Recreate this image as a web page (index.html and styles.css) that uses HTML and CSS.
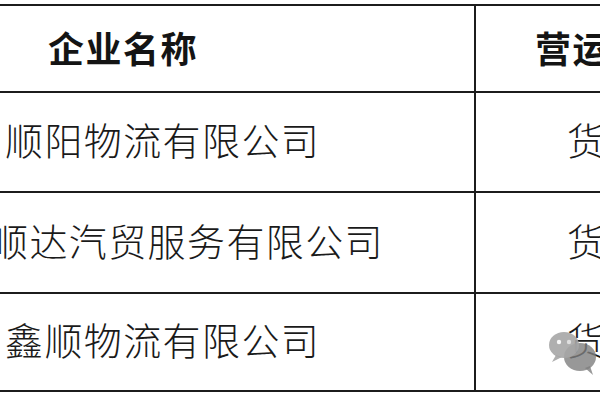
FILE: index.html
```html
<!DOCTYPE html>
<html lang="zh-CN">
<head>
<meta charset="utf-8">
<title>企业名称</title>
<link rel="stylesheet" href="styles.css">
</head>
<body>
<div class="frame">
  <div class="sheet">
    <div class="cell cell--name cell--head"><span class="head-text head-text--name">企业名称</span></div>
    <div class="cell cell--head"><span class="head-text head-text--scope">营运</span></div>

    <div class="cell cell--name"><span class="name name--short">顺阳物流有限公司</span></div>
    <div class="cell"><span class="scope">货</span></div>

    <div class="cell cell--name"><span class="name name--long">顺达汽贸服务有限公司</span></div>
    <div class="cell"><span class="scope">货</span></div>

    <div class="cell cell--name"><span class="name name--short">鑫顺物流有限公司</span></div>
    <div class="cell"><span class="scope">货</span></div>
  </div>
  <svg class="watermark" width="52" height="48" viewBox="0 0 52 48" aria-hidden="true">
    <ellipse cx="33" cy="29" rx="16" ry="14" fill="#7e7e7e" opacity="0.8"/>
    <path d="M38 40 L46 47 L43 38 Z" fill="#7e7e7e" opacity="0.8"/>
    <ellipse cx="17" cy="17" rx="15" ry="13" fill="#a6a6a6" opacity="0.9"/>
    <path d="M9 27 L5 34 L15 29 Z" fill="#a6a6a6" opacity="0.9"/>
    <circle cx="12" cy="14" r="2.2" fill="#ffffff" opacity="0.9"/>
    <circle cx="22" cy="14" r="2.2" fill="#ffffff" opacity="0.6"/>
  </svg>
</div>
</body>
</html>
```

FILE: styles.css
```css
html, body {
  margin: 0;
  padding: 0;
  background: #ffffff;
}

.frame {
  position: relative;
  width: 600px;
  height: 400px;
  overflow: hidden;
  background: #ffffff;
  font-family: "Noto Sans CJK SC", "Noto Sans", sans-serif;
  color: #1e1e1e;
}

.sheet {
  display: grid;
  grid-template-columns: 516px 260px;
  grid-template-rows: 87px 100px 101px 98px;
  margin-top: 4px;
  margin-left: -40px;
  border-top: 2px solid #1c1c1c;
}

.cell {
  box-sizing: border-box;
  display: flex;
  align-items: center;
  border-bottom: 2px solid #1c1c1c;
  white-space: nowrap;
  overflow: hidden;
}

.cell--name {
  border-right: 2px solid #1c1c1c;
}

.head-text {
  font-size: 36px;
  font-weight: 700;
  letter-spacing: 1.5px;
  line-height: 1;
  margin-top: -3px;
  color: #141414;
}

.head-text--name {
  padding-left: 88px;
}

.head-text--scope {
  padding-left: 59px;
}

.name {
  font-size: 38px;
  font-weight: 300;
  letter-spacing: 1.4px;
  line-height: 1;
  margin-top: -6px;
  color: #1a1a1a;
}

.name--short {
  padding-left: 45px;
}

.name--long {
  padding-left: 30px;
}

.scope {
  font-size: 38px;
  font-weight: 300;
  line-height: 1;
  margin-top: -6px;
  padding-left: 91px;
  color: #1a1a1a;
}

.watermark {
  position: absolute;
  left: 547px;
  top: 328px;
}
```
